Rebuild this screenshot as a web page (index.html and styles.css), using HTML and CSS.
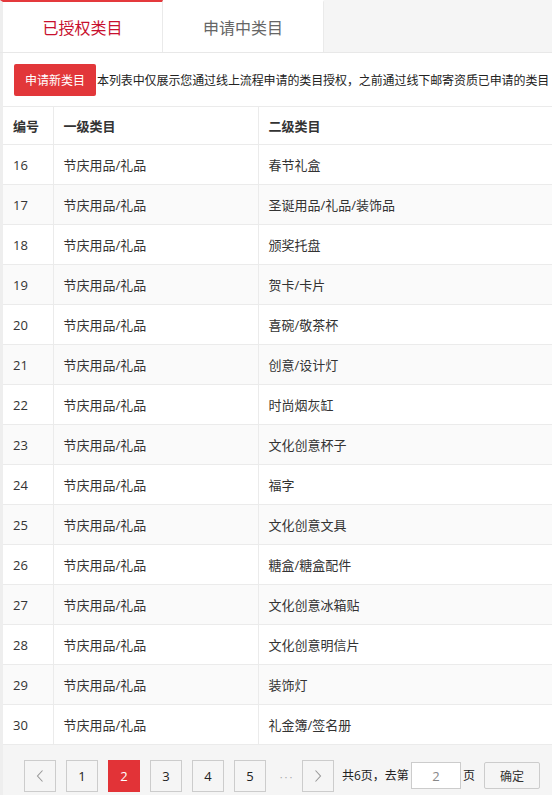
FILE: index.html
```html
<!DOCTYPE html>
<html lang="zh-CN">
<head>
<meta charset="utf-8">
<title>已授权类目</title>
<link rel="stylesheet" href="styles.css">
</head>
<body>
<div class="page">
  <div class="tabs">
    <div class="tab active">已授权类目</div>
    <div class="tab">申请中类目</div>
    <div class="tab-rest"></div>
  </div>
  <div class="panel">
    <div class="toolbar">
      <button class="btn-apply">申请新类目</button>
      <span class="note">本列表中仅展示您通过线上流程申请的类目授权，之前通过线下邮寄资质已申请的类目</span>
    </div>
    <table class="grid">
      <colgroup><col class="c1"><col class="c2"><col class="c3"></colgroup>
      <thead>
        <tr><th>编号</th><th>一级类目</th><th>二级类目</th></tr>
      </thead>
      <tbody>
        <tr><td>16</td><td>节庆用品/礼品</td><td>春节礼盒</td></tr>
        <tr><td>17</td><td>节庆用品/礼品</td><td>圣诞用品/礼品/装饰品</td></tr>
        <tr><td>18</td><td>节庆用品/礼品</td><td>颁奖托盘</td></tr>
        <tr><td>19</td><td>节庆用品/礼品</td><td>贺卡/卡片</td></tr>
        <tr><td>20</td><td>节庆用品/礼品</td><td>喜碗/敬茶杯</td></tr>
        <tr><td>21</td><td>节庆用品/礼品</td><td>创意/设计灯</td></tr>
        <tr><td>22</td><td>节庆用品/礼品</td><td>时尚烟灰缸</td></tr>
        <tr><td>23</td><td>节庆用品/礼品</td><td>文化创意杯子</td></tr>
        <tr><td>24</td><td>节庆用品/礼品</td><td>福字</td></tr>
        <tr><td>25</td><td>节庆用品/礼品</td><td>文化创意文具</td></tr>
        <tr><td>26</td><td>节庆用品/礼品</td><td>糖盒/糖盒配件</td></tr>
        <tr><td>27</td><td>节庆用品/礼品</td><td>文化创意冰箱贴</td></tr>
        <tr><td>28</td><td>节庆用品/礼品</td><td>文化创意明信片</td></tr>
        <tr><td>29</td><td>节庆用品/礼品</td><td>装饰灯</td></tr>
        <tr><td>30</td><td>节庆用品/礼品</td><td>礼金簿/签名册</td></tr>
      </tbody>
    </table>
  </div>
  <div class="pager">
    <span class="pg arrow"><svg width="10" height="14" viewBox="0 0 10 14"><path d="M7.5 1.5 L2.5 7 L7.5 12.5" fill="none" stroke="#999" stroke-width="1.1"/></svg></span>
    <span class="pg">1</span>
    <span class="pg current">2</span>
    <span class="pg">3</span>
    <span class="pg">4</span>
    <span class="pg">5</span>
    <span class="dots">···</span>
    <span class="pg arrow"><svg width="10" height="14" viewBox="0 0 10 14"><path d="M2.5 1.5 L7.5 7 L2.5 12.5" fill="none" stroke="#999" stroke-width="1.1"/></svg></span>
    <span class="total">共6页，去第</span>
    <input class="goto" type="text" value="2">
    <span class="unit">页</span>
    <button class="btn-ok">确定</button>
  </div>
</div>
</body>
</html>
```

FILE: styles.css
```css
* { box-sizing: border-box; }
html, body { margin: 0; padding: 0; background: #fff; }
body {
  font-family: "Open Sans", "Noto Sans CJK SC", sans-serif;
  font-size: 13px;
  color: #333;
  width: 552px;
  overflow: hidden;
}
.page {
  border-left: 3px solid #eeeeee;
  min-height: 795px;
}
.tabs {
  display: flex;
  height: 53px;
  border-bottom: 1px solid #e8e8e8;
  margin-left: -3px;
}
.tab {
  width: 161px;
  height: 52px;
  background: #fff;
  border-top: 2px solid transparent;
  display: flex;
  align-items: center;
  justify-content: center;
  font-size: 16px;
  color: #666;
  border-right: 1px solid #eaeaea;
}
.tab.active {
  border-top-color: #e4393c;
  color: #c8102e;
  border-left: 3px solid #eee;
  width: 163px;
}
.tab-rest {
  flex: 1;
  background: #f5f5f5;
  height: 52px;
}
.panel {
  background: #fff;
}
.toolbar {
  display: flex;
  align-items: center;
  height: 53px;
  padding: 11px 0 10px 11px;
  white-space: nowrap;
  overflow: hidden;
}
.btn-apply {
  flex: none;
  width: 82px;
  height: 32px;
  border: 0;
  border-radius: 2px;
  background: #e2373a;
  color: #fff;
  font-family: inherit;
  font-size: 12px;
  padding: 0;
  margin-right: 1px;
}
.note {
  font-size: 12px;
  color: #222;
  white-space: nowrap;
  letter-spacing: -0.1px;
}
.grid {
  width: 549px;
  border-collapse: collapse;
  table-layout: fixed;
}
.grid col.c1 { width: 50px; }
.grid col.c2 { width: 205px; }
.grid col.c3 { width: 294px; }
.grid th, .grid td {
  border: 1px solid #ebebeb;
  text-align: left;
  padding: 0 10px;
  font-size: 13px;
  line-height: 16px;
  white-space: nowrap;
}
.grid th:first-child, .grid td:first-child { border-left: 0; }
.grid th {
  height: 38px;
  font-weight: bold;
  color: #333;
}
.grid td {
  height: 40px;
  color: #333;
}
.grid tbody tr:nth-child(even) td { background: #fafafa; }
.pager {
  background: #f5f5f5;
  display: flex;
  height: 51px;
  padding: 15px 0 0 21px;
  align-items: flex-start;
  font-size: 12px;
}
.pg {
  width: 32px;
  height: 32px;
  border: 1px solid #cccccc;
  background: #f5f5f5;
  display: flex;
  align-items: center;
  justify-content: center;
  margin-right: 10px;
  font-size: 13px;
  color: #222;
}
.pg.current {
  background: #e23337;
  border-color: #e23337;
  color: #fff;
}
.dots {
  width: 26px;
  height: 32px;
  display: flex;
  align-items: center;
  justify-content: center;
  color: #aaa;
  font-size: 11px;
  letter-spacing: 2px;
  margin-left: -2px;
  margin-right: 2px;
}
.total {
  line-height: 32px;
  margin-left: -2px;
  color: #222;
}
.goto {
  width: 50px;
  height: 27px;
  margin: 2px 2px 0 2px;
  border: 1px solid #cccccc;
  background: #fff;
  text-align: center;
  color: #888;
  font-family: inherit;
  font-size: 13px;
  padding: 0;
  outline: none;
}
.unit {
  line-height: 32px;
  color: #222;
}
.btn-ok {
  margin: 2px 0 0 9px;
  width: 56px;
  height: 27px;
  border: 1px solid #cccccc;
  border-radius: 2px;
  background: #f5f5f5;
  font-family: inherit;
  font-size: 12px;
  color: #333;
  padding: 0;
}
```
